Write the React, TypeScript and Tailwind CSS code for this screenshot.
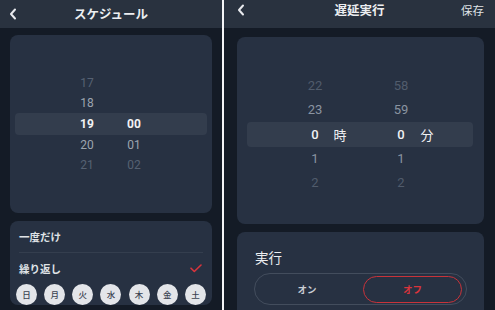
const jp = "font-['Noto_Sans_CJK_JP','Noto_Sans',sans-serif]";
const num = "font-['Roboto','Noto_Sans_CJK_JP',sans-serif]";

function Chevron() {
  return (
    <svg width="8" height="12" viewBox="0 0 8 12" fill="none">
      <path d="M6 1.5L2 6l4 4.5" stroke="#e8eaee" strokeWidth="2" strokeLinecap="round" strokeLinejoin="round" />
    </svg>
  );
}

function Check() {
  return (
    <svg width="12" height="9" viewBox="0 0 12 9" fill="none">
      <path d="M1 4.2l3.3 3.3L11 1" stroke="#d8343c" strokeWidth="1.6" strokeLinecap="round" strokeLinejoin="round" />
    </svg>
  );
}

const days = ['日', '月', '火', '水', '木', '金', '土'];

function SchedulePanel() {
  const rows = [
    { h: '17', m: '', c: 'text-[#566172]' },
    { h: '18', m: '', c: 'text-[#9ca4af]' },
  ];
  const after = [
    { h: '20', m: '01', c: 'text-[#9ca4af]' },
    { h: '21', m: '02', c: 'text-[#566172]' },
  ];
  return (
    <div className={`w-[222px] h-full flex flex-col bg-[#141b26] ${jp}`}>
      <div className="h-[28px] shrink-0 bg-[#29323f] flex items-center justify-center relative">
        <div className="absolute left-[9px] top-[8px]">
          <Chevron />
        </div>
        <span className="text-[12.5px] font-semibold text-[#eceef1]">スケジュール</span>
      </div>

      <div className="flex flex-col gap-[8px] pl-[10px] pr-[10px] pt-[7px]">
        {/* time picker */}
        <div className="h-[178px] rounded-[8px] bg-[#273142] pt-[38px]">
          {rows.map((r) => (
            <div key={r.h} className={`h-[20px] flex items-center pl-[57px] text-[12px] ${num} ${r.c}`}>
              <span className="w-[40px] text-center">{r.h}</span>
              <span className="w-[40px] ml-[7px] text-center">{r.m}</span>
            </div>
          ))}
          <div className={`h-[22px] mx-[5px] rounded-[4px] bg-[#333d4d] flex items-center pl-[52px] text-[12px] font-bold text-[#f1f2f4] ${num}`}>
            <span className="w-[40px] text-center">19</span>
            <span className="w-[40px] ml-[7px] text-center">00</span>
          </div>
          {after.map((r) => (
            <div key={r.h} className={`h-[20px] flex items-center pl-[57px] text-[12px] ${num} ${r.c}`}>
              <span className="w-[40px] text-center">{r.h}</span>
              <span className="w-[40px] ml-[7px] text-center">{r.m}</span>
            </div>
          ))}
        </div>

        {/* repeat */}
        <div className="h-[84px] rounded-[8px] bg-[#273142] flex flex-col">
          <div className="h-[31px] flex items-center px-[9px] text-[10.5px] font-semibold text-[#dfe2e6]">一度だけ</div>
          <div className="h-px mx-[9px] bg-[#343e4e]" />
          <div className="h-[31px] flex items-center justify-between pl-[9px] pr-[10px] text-[10.5px] font-semibold text-[#dfe2e6]">
            <span>繰り返し</span>
            <Check />
          </div>
          <div className="h-[21px] flex justify-between px-[6px]">
            {days.map((d) => (
              <div key={d} className="w-[21px] h-[21px] rounded-full bg-[#e3e5e9] flex items-center justify-center text-[8.5px] font-medium text-[#3b4351]">
                {d}
              </div>
            ))}
          </div>
        </div>
      </div>
    </div>
  );
}

function DelayPanel() {
  const before = [
    { h: '22', m: '58', c: 'text-[#515c6c]' },
    { h: '23', m: '59', c: 'text-[#8a94a1]' },
  ];
  const after = [
    { h: '1', m: '1', c: 'text-[#8a94a1]' },
    { h: '2', m: '2', c: 'text-[#515c6c]' },
  ];
  const Row = ({ h, m, c }: { h: string; m: string; c: string }) => (
    <div className={`h-[24px] flex items-center pl-[63px] text-[13px] ${num} ${c}`}>
      <span className="w-[30px] text-center">{h}</span>
      <span className="w-[20px]" />
      <span className="w-[36px]" />
      <span className="w-[30px] text-center">{m}</span>
    </div>
  );
  return (
    <div className={`flex-1 h-full flex flex-col bg-[#141b26] ${jp}`}>
      <div className="h-[28px] shrink-0 bg-[#29323f] flex items-center justify-center relative">
        <div className="absolute left-[13px] top-[4px]">
          <Chevron />
        </div>
        <span className="text-[12.5px] font-semibold text-[#eceef1] mt-[-8px]">遅延実行</span>
        <span className="absolute right-[11px] top-[2px] text-[11.5px] text-[#dfe2e6]">保存</span>
      </div>

      <div className="flex flex-col gap-[8px] pl-[13px] pr-[11px] pt-[9px]">
        <div className="h-[187px] rounded-[8px] bg-[#273142] pt-[37px]">
          {before.map((r) => (
            <Row key={r.h} {...r} />
          ))}
          <div className={`h-[25px] ml-[10px] mr-[11px] rounded-[4px] bg-[#333d4d] flex items-center pl-[53px] text-[13px] text-[#f1f2f4] ${num}`}>
            <span className="w-[30px] text-center font-medium">0</span>
            <span className={`w-[20px] text-center ${jp}`}>時</span>
            <span className="w-[36px]" />
            <span className="w-[30px] text-center font-medium">0</span>
            <span className={`w-[22px] text-center ${jp}`}>分</span>
          </div>
          {after.map((r) => (
            <Row key={r.h} {...r} />
          ))}
        </div>

        <div className="h-[90px] rounded-t-[8px] bg-[#273142] pt-[15px] px-[17px]">
          <div className="h-[20px] flex items-center pl-[1px] text-[13.5px] text-[#eceef1]">実行</div>
          <div className="mt-[6px] h-[32px] rounded-full border border-[#434d5d] flex items-center p-[2px]">
            <div className="w-[100px] text-center text-[9.5px] font-bold text-[#c9cdd3]">オン</div>
            <div className="ml-auto mr-[2px] w-[99px] h-[27px] rounded-full border-[1.5px] border-[#c8333a] flex items-center justify-center text-[9.5px] font-bold text-[#d8343c]">
              オフ
            </div>
          </div>
        </div>
      </div>
    </div>
  );
}

export default function App() {
  return (
    <div className="w-[495px] h-[310px] overflow-hidden flex bg-[#141b26]">
      <SchedulePanel />
      <div className="w-[2px] h-full bg-[#f4f5f7]" />
      <DelayPanel />
    </div>
  );
}
